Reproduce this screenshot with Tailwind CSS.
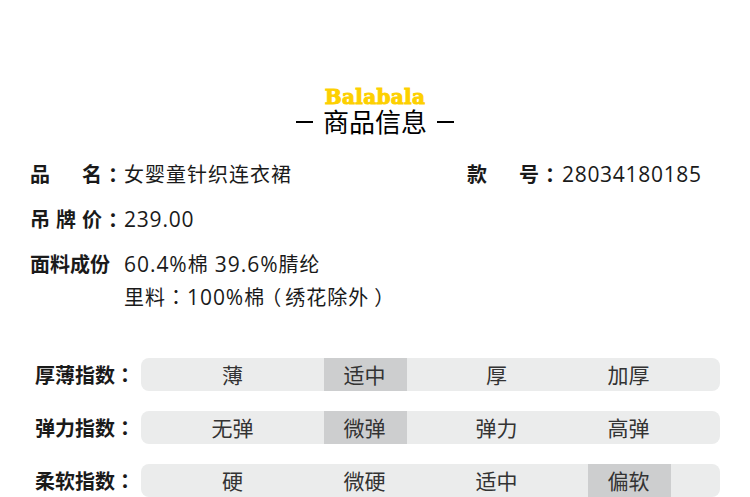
<!DOCTYPE html>
<html lang="zh-CN">
<head>
<meta charset="utf-8">
<script src="https://cdn.jsdelivr.net/npm/@tailwindcss/browser@4"></script>
</head>
<body class="bg-white h-[497px] overflow-hidden font-['Open_Sans','Noto_Sans_CJK_SC',sans-serif] text-[#1a1a1a]">
<div class="pt-[87px]">
  <div class="flex flex-col items-center">
    <div class="h-[20px] leading-[20px] text-[20px] font-bold text-[#fdd000] tracking-[0.3px] font-['DejaVu_Serif',serif] [-webkit-text-stroke:1px_#fdd000]">Balabala</div>
    <div class="h-[30px] leading-[28px] text-[26px] text-black flex items-center gap-[10px]">
      <span class="w-[17px] h-[2px] bg-black"></span>
      <span>商品信息</span>
      <span class="w-[17px] h-[2px] bg-black"></span>
    </div>
  </div>

  <div class="mt-[22px] pl-[30px] text-[20px] leading-[32px] tracking-[1px]">
    <div class="flex h-[32px]">
      <div class="w-[94px] flex font-bold"><span class="w-[52px]">品</span><span>名</span><span lang="zh-TW" class="font-['Noto_Sans_CJK_TC']">：</span></div>
      <div class="w-[343px]">女婴童针织连衣裙</div>
      <div class="w-[95px] flex font-bold"><span class="w-[52px]">款</span><span>号</span><span lang="zh-TW" class="font-['Noto_Sans_CJK_TC']">：</span></div>
      <div class="text-[21px] leading-[30px] tracking-[0.7px]">28034180185</div>
    </div>
    <div class="flex h-[32px] mt-[13px]">
      <div class="w-[94px] flex font-bold"><span class="w-[26px]">吊</span><span class="w-[26px]">牌</span><span>价</span><span lang="zh-TW" class="font-['Noto_Sans_CJK_TC']">：</span></div>
      <div class="text-[21px] leading-[30px] tracking-[0.8px]">239.00</div>
    </div>
    <div class="flex mt-[13px]">
      <div class="w-[94px] font-bold whitespace-nowrap tracking-normal">面料成份</div>
      <div class="whitespace-nowrap">
        <div class="h-[32px]"><span class="text-[21px] leading-none tracking-[0.95px]">60.4%</span>棉 <span class="text-[21px] leading-none tracking-[0.95px]">39.6%</span>腈纶</div>
        <div class="h-[32px]">里料<span lang="zh-TW" class="font-['Noto_Sans_CJK_TC']">：</span><span class="text-[21px] leading-none tracking-[0.95px]">100%</span><span class="tracking-[-3px]">棉</span><span lang="zh-TW" class="font-['Noto_Sans_CJK_TC'] mr-[3px]">（</span>绣花除外<span lang="zh-TW" class="font-['Noto_Sans_CJK_TC'] ml-[5px]">）</span></div>
      </div>
    </div>
  </div>

  <div class="mt-[45px] flex flex-col gap-[20px] text-[20px]">
    <div class="flex items-center pl-[35px]">
      <div class="w-[106px] pt-[2px] font-bold whitespace-nowrap">厚薄指数<span lang="zh-TW" class="font-['Noto_Sans_CJK_TC']">：</span></div>
      <div class="w-[579px] h-[33px] rounded-[8px] bg-[#ebecec] pl-[26.5px] pr-[24.5px] grid grid-cols-4 text-center text-[21px] leading-[35px] overflow-hidden text-[#333]">
        <div class="flex justify-center"><span class="w-[83px] pr-[2px]">薄</span></div>
        <div class="flex justify-center"><span class="w-[83px] pr-[2px] bg-[#cdcecf]">适中</span></div>
        <div class="flex justify-center"><span class="w-[83px] pr-[2px]">厚</span></div>
        <div class="flex justify-center"><span class="w-[83px] pr-[2px]">加厚</span></div>
      </div>
    </div>
    <div class="flex items-center pl-[35px]">
      <div class="w-[106px] pt-[2px] font-bold whitespace-nowrap">弹力指数<span lang="zh-TW" class="font-['Noto_Sans_CJK_TC']">：</span></div>
      <div class="w-[579px] h-[33px] rounded-[8px] bg-[#ebecec] pl-[26.5px] pr-[24.5px] grid grid-cols-4 text-center text-[21px] leading-[35px] overflow-hidden text-[#333]">
        <div class="flex justify-center"><span class="w-[83px] pr-[2px]">无弹</span></div>
        <div class="flex justify-center"><span class="w-[83px] pr-[2px] bg-[#cdcecf]">微弹</span></div>
        <div class="flex justify-center"><span class="w-[83px] pr-[2px]">弹力</span></div>
        <div class="flex justify-center"><span class="w-[83px] pr-[2px]">高弹</span></div>
      </div>
    </div>
    <div class="flex items-center pl-[35px]">
      <div class="w-[106px] pt-[2px] font-bold whitespace-nowrap">柔软指数<span lang="zh-TW" class="font-['Noto_Sans_CJK_TC']">：</span></div>
      <div class="w-[579px] h-[33px] rounded-[8px] bg-[#ebecec] pl-[26.5px] pr-[24.5px] grid grid-cols-4 text-center text-[21px] leading-[35px] overflow-hidden text-[#333]">
        <div class="flex justify-center"><span class="w-[83px] pr-[2px]">硬</span></div>
        <div class="flex justify-center"><span class="w-[83px] pr-[2px]">微硬</span></div>
        <div class="flex justify-center"><span class="w-[83px] pr-[2px]">适中</span></div>
        <div class="flex justify-center"><span class="w-[83px] pr-[2px] bg-[#cdcecf]">偏软</span></div>
      </div>
    </div>
  </div>
</div>
</body>
</html>
